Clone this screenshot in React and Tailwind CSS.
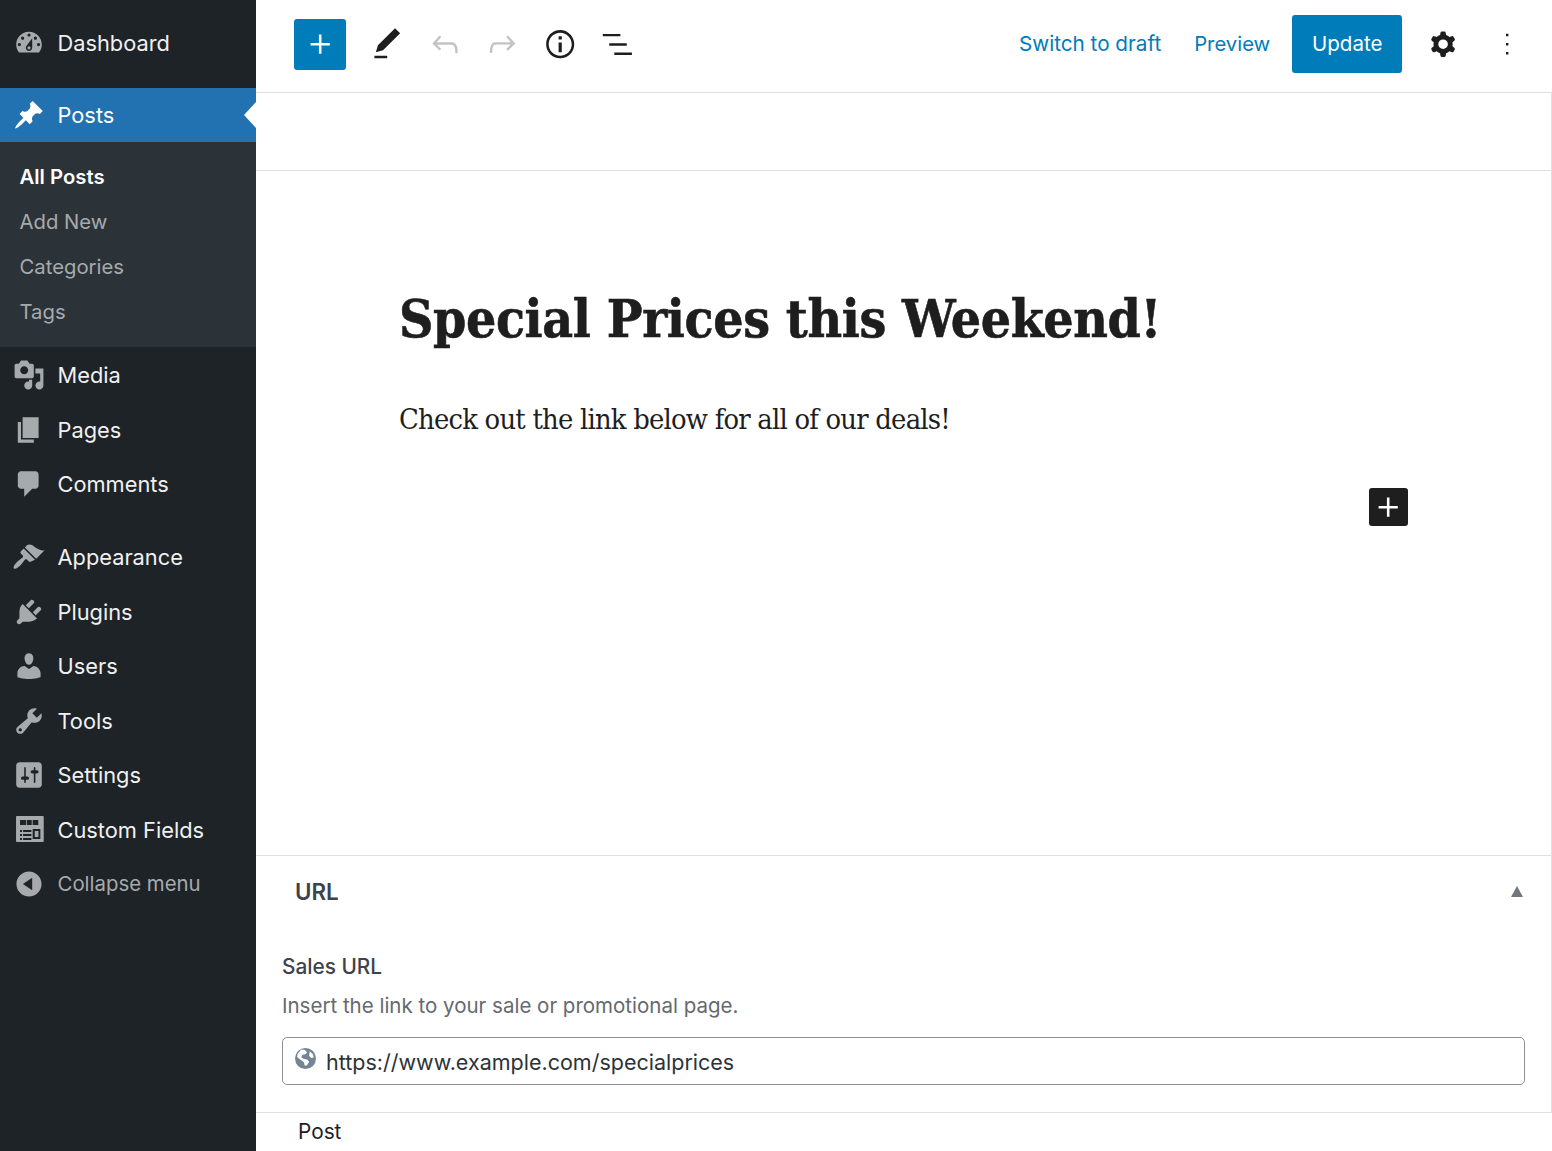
import React from "react";

const I = {
  dashboard: "M3.76 16h12.48c1.1-1.37 1.76-3.11 1.76-5 0-4.42-3.58-8-8-8s-8 3.58-8 8c0 1.89.66 3.63 1.76 5zM10 4c.55 0 1 .45 1 1s-.45 1-1 1-1-.45-1-1 .45-1 1-1zM6 6c.55 0 1 .45 1 1s-.45 1-1 1-1-.45-1-1 .45-1 1-1zm8 0c.55 0 1 .45 1 1s-.45 1-1 1-1-.45-1-1 .45-1 1-1zm-5.37 5.55L12 7v6c0 1.1-.9 2-2 2s-2-.9-2-2c0-.57.24-1.08.63-1.45zM4 10c.55 0 1 .45 1 1s-.45 1-1 1-1-.45-1-1 .45-1 1-1zm12 0c.55 0 1 .45 1 1s-.45 1-1 1-1-.45-1-1 .45-1 1-1zm-5 3c0-.55-.45-1-1-1s-1 .45-1 1 .45 1 1 1 1-.45 1-1z",
  post: "M10.44 3.02l1.82-1.82 6.36 6.35-1.83 1.82c-1.05-.68-2.48-.57-3.41.36l-.75.75c-.92.93-1.04 2.35-.35 3.41l-1.83 1.82-2.41-2.41-2.8 2.79c-.42.42-3.38 2.71-3.8 2.29s1.86-3.39 2.28-3.81l2.79-2.79L4.1 9.36l1.83-1.82c1.05.69 2.48.57 3.4-.36l.75-.75c.93-.92 1.05-2.35.36-3.41z",
  media: "M13 11V4c0-.55-.45-1-1-1h-1.67L9 1H5L3.67 3H2c-.55 0-1 .45-1 1v7c0 .55.45 1 1 1h10c.55 0 1-.45 1-1zM7 4.5c1.38 0 2.5 1.12 2.5 2.5S8.38 9.5 7 9.5 4.5 8.38 4.5 7 5.62 4.5 7 4.5zM14 6h5v10.5c0 1.38-1.12 2.5-2.5 2.5S14 17.88 14 16.5s1.12-2.5 2.5-2.5c.17 0 .34.02.5.05V9h-3V6zm-4 8.05V13h2v3.5c0 1.38-1.12 2.5-2.5 2.5S7 17.88 7 16.5 8.12 14 9.5 14c.17 0 .34.02.5.05z",
  page: "M6 15V2h10v13H6zm-1 1h8v2H3V5h2v11z",
  comments: "M5 2h9c1.1 0 2 .9 2 2v7c0 1.1-.9 2-2 2h-2l-5 5v-5H5c-1.1 0-2-.9-2-2V4c0-1.1.9-2 2-2z",
  appearance: "M14.48 11.06L7.41 3.99l1.5-1.5c.5-.56 2.3-.47 3.51.32 1.21.8 1.43 1.28 2.91 2.1 1.18.64 2.45 1.26 4.45.85zm-.71.71L6.7 4.7 4.93 6.47c-.39.39-.39 1.02 0 1.41l1.06 1.06c.39.39.39 1.03 0 1.42-.6.6-1.43 1.11-2.21 1.69-.35.26-.7.53-1.01.84-1.34 1.34-3 3.3-2.2 4.3.9.8 2.96-.86 4.3-2.2.31-.31.58-.66.84-1.01.58-.78 1.09-1.61 1.69-2.21.39-.39 1.03-.39 1.42 0l1.06 1.06c.39.39 1.02.39 1.41 0z",
  plugins: "M13.11 4.36L9.87 7.6 8 5.73l3.24-3.24c.35-.34 1.05-.2 1.56.32.52.51.66 1.21.31 1.55zm-8 1.77l.91-1.12 9.01 9.01-1.19.84c-.71.71-2.63 1.16-3.82 1.16H6.14L4.9 17.26c-.59.59-1.54.59-2.12 0-.59-.58-.59-1.53 0-2.12l1.24-1.24v-3.88c0-1.13.4-3.19 1.09-3.89zm7.26 3.97l3.24-3.24c.34-.35 1.04-.21 1.55.31.52.51.66 1.21.31 1.55l-3.24 3.25z",
  users: "M10 9.25c-2.27 0-2.73-3.44-2.73-3.44C7 4.02 7.82 2 9.97 2c2.16 0 2.98 2.02 2.71 3.81 0 0-.41 3.44-2.68 3.44zm0 2.57L12.72 10c2.39 0 4.52 2.33 4.52 4.53v2.49s-3.65 1.13-7.24 1.13c-3.65 0-7.24-1.13-7.24-1.13v-2.49c0-2.25 1.94-4.48 4.47-4.48z",
  tools: "M16.68 9.77c-1.34 1.34-3.3 1.67-4.95.99l-5.41 6.52c-.99.99-2.59.99-3.58 0s-.99-2.59 0-3.57l6.52-5.42c-.68-1.65-.35-3.61.99-4.95 1.28-1.28 3.12-1.62 4.72-1.06l-2.89 2.89 2.82 2.82 2.86-2.87c.53 1.58.18 3.39-1.08 4.65zM3.81 16.21c.4.39 1.04.39 1.43 0 .4-.4.4-1.04 0-1.43-.39-.4-1.03-.4-1.43 0-.39.39-.39 1.03 0 1.43z",
  settings: "M18 16V4c0-1.1-.9-2-2-2H4c-1.1 0-2 .9-2 2v12c0 1.1.9 2 2 2h12c1.1 0 2-.9 2-2zM8 11h1c.55 0 1 .45 1 1s-.45 1-1 1H8v1.5c0 .28-.22.5-.5.5s-.5-.22-.5-.5V13H6c-.55 0-1-.45-1-1s.45-1 1-1h1V5.5c0-.28.22-.5.5-.5s.5.22.5.5V11zm5-2h-1c-.55 0-1-.45-1-1s.45-1 1-1h1V5.5c0-.28.22-.5.5-.5s.5.22.5.5V7h1c.55 0 1 .45 1 1s-.45 1-1 1h-1v5.5c0 .28-.22.5-.5.5s-.5-.22-.5-.5V9z",
  fields: "M2.4 1.25H18.700c.3 0 .5.2.5.5V17c0 .3-.2.5-.5.5H2.400c-.3 0-.5-.2-.5-.5V1.750c0-.3.2-.5.5-.5zM4.400 3.750v3.150h3.700V3.750H4.400zm4.200 0v3.150h3.100V3.750H8.600zm3.700 0v3.150h3.500V3.750h-3.500zM4.400 10v1.200h1.200V10H4.400zm1.900 0v1.200h5.200V10H6.300zM4.400 12.500v1.200h1.200v-1.200H4.400zm1.900 0v1.200h5.200v-1.200H6.300zM4.400 15v1.200h1.200V15H4.400zm1.900 0v1.200h5.200V15H6.300zM12.300 9.400v6.200h4.800V9.400h-4.800zm1.300 1.200h2.300v3.800h-2.300v-3.800z",
  collapse: "M10 2.16c4.33 0 7.84 3.51 7.84 7.84s-3.51 7.84-7.84 7.84S2.16 14.33 2.16 10 5.71 2.16 10 2.16zm2 11.72V6.120L6.180 9.970z",
};

function Dash({ d, className = "fill-[#a7aaad]", evenodd }) {
  return (
    <svg viewBox="0 0 20 20" className={`w-8 h-8 shrink-0 ${className}`}>
      <path d={d} fillRule={evenodd ? "evenodd" : undefined} />
    </svg>
  );
}

function MenuItem({ icon, label, evenodd, muted }) {
  return (
    <div className="flex items-center h-[54.6px] pl-[13px]">
      <Dash d={icon} evenodd={evenodd} />
      <span className={`ml-[12.500px] pt-[1.500px] leading-none ${muted ? "text-[20.4px] text-[#a7aaad]" : "text-[21.8px] text-[#f0f0f1]"}`}>{label}</span>
    </div>
  );
}

function Sub({ children, active }) {
  return (
    <div className={`h-[45px] flex items-center pl-[19.5px] text-[20.3px] ${active ? "text-white font-semibold" : "text-[#a7aaad]"}`}>
      {children}
    </div>
  );
}

function Tb({ children, className = "fill-[#1e1e1e]" }) {
  return (
    <div className="w-[57.6px] h-[38px] flex items-center justify-center">
      <svg viewBox="0 0 24 24" className={`w-[38.4px] h-[38.4px] ${className}`}>{children}</svg>
    </div>
  );
}

export default function App() {
  return (
    <div className="flex h-[1151px] overflow-hidden bg-white font-['Inter',sans-serif]">
      <aside className="w-[256px] shrink-0 bg-[#1d2327] pt-4">
        <MenuItem icon={I.dashboard} label="Dashboard" />
        <div className="mt-[17.4px] h-[54px] bg-[#2271b1] relative flex items-center pl-[13px]">
          <Dash d={I.post} className="fill-white" />
          <span className="ml-[12.500px] pt-[1.500px] text-[21.8px] leading-none text-white">Posts</span>
          <div className="absolute right-0 top-[14px] w-0 h-0 border-y-[13px] border-y-transparent border-r-[12px] border-r-white" />
        </div>
        <div className="bg-[#2c3338] h-[205px] py-[12.500px]">
          <Sub active>All Posts</Sub>
          <Sub>Add New</Sub>
          <Sub>Categories</Sub>
          <Sub>Tags</Sub>
        </div>
        <div className="pt-[1px]">
          <MenuItem icon={I.media} label="Media" />
          <MenuItem icon={I.page} label="Pages" />
          <MenuItem icon={I.comments} label="Comments" />
        </div>
        <div className="mt-[18px]">
          <MenuItem icon={I.appearance} label="Appearance" />
          <MenuItem icon={I.plugins} label="Plugins" />
          <MenuItem icon={I.users} label="Users" />
          <MenuItem icon={I.tools} label="Tools" />
          <MenuItem icon={I.settings} label="Settings" />
          <MenuItem icon={I.fields} label="Custom Fields" evenodd />
        </div>
        <div className="-mt-[1px]">
          <MenuItem icon={I.collapse} label="Collapse menu" muted />
        </div>
      </aside>

      <main className="flex-1 min-w-0 flex flex-col">
        <header className="h-[93px] shrink-0 border-b border-[#e0e0e0] flex items-center pl-[38px] pr-[26px] pb-[4px]">
          <div className="w-[52px] h-[51px] rounded-[3px] bg-[#007cba] flex items-center justify-center">
            <svg viewBox="0 0 24 24" className="w-[38.4px] h-[38.4px] fill-white">
              <path d="M18 11.2h-5.200V6h-1.600v5.200H6v1.600h5.200V18h1.600v-5.200H18z" />
            </svg>
          </div>
          <div className="flex items-center ml-[12.500px]">
            <Tb><path d="M20.100 5.100L16.900 2 6.200 12.700l-1.300 4.400 4.500-1.300L20.100 5.100zM4 20.800h8v-1.500H4v1.500z" /></Tb>
            <Tb className="fill-[#c3c3c3]"><path d="M18.300 11.700c-.6-.6-1.400-.9-2.300-.9H6.700l2.900-3.300-1.100-1-4.500 5L8.500 16l1-1-2.700-2.700H16c.5 0 .9.2 1.300.5 1 1 1 3.400 1 4.500v.3h1.500v-.2c0-1.500 0-4.300-1.500-5.700z" /></Tb>
            <Tb className="fill-[#c3c3c3]"><path d="M15.600 6.500l-1.100 1 2.900 3.300H8c-.9 0-1.700.3-2.300.9-1.400 1.500-1.400 4.200-1.400 5.600v.2h1.500v-.3c0-1.100 0-3.500 1-4.500.3-.3.7-.5 1.300-.5h9.200L14.500 15l1.100 1.100 4.600-4.600-4.600-5z" /></Tb>
            <Tb><path d="M12 3.200c-4.800 0-8.800 3.900-8.800 8.800 0 4.800 3.900 8.800 8.800 8.800 4.800 0 8.800-3.900 8.800-8.800 0-4.800-4-8.800-8.800-8.800zm0 16c-4 0-7.200-3.300-7.200-7.200C4.800 8 8 4.800 12 4.800s7.200 3.300 7.200 7.200c0 4-3.200 7.200-7.200 7.200zM11 17h2v-6h-2v6zm0-8h2V7h-2v2z" /></Tb>
            <Tb><path d="M3 5.600h11v1.500H3zM7 11.400h11v1.500H7zM10.200 17.200h11v1.500h-11z" /></Tb>
          </div>
          <div className="flex-1" />
          <span className="pt-[1px] text-[20.7px] text-[#007cba] leading-none">Switch to draft</span>
          <span className="pt-[1px] ml-[33px] text-[20.3px] text-[#007cba] leading-none">Preview</span>
          <div className="pt-[1px] ml-[22px] w-[110px] h-[58px] rounded-[3px] bg-[#007cba] text-white text-[20.5px] flex items-center justify-center">Update</div>
          <svg viewBox="0 0 24 24" className="ml-[22px] w-[38.4px] h-[38.4px] fill-[#1e1e1e]">
            <path fillRule="evenodd" d="M10.289 4.836A1 1 0 0111.275 4h1.306a1 1 0 01.987.836l.244 1.466c.787.26 1.503.679 2.108 1.218l1.393-.522a1 1 0 011.216.437l.653 1.130a1 1 0 01-.23 1.273l-1.148.944a6.025 6.025 0 010 2.435l1.149.946a1 1 0 01.23 1.272l-.653 1.130a1 1 0 01-1.216.437l-1.394-.522c-.605.54-1.320.958-2.108 1.218l-.244 1.466a1 1 0 01-.987.836h-1.306a1 1 0 01-.986-.836l-.244-1.466a5.995 5.995 0 01-2.108-1.218l-1.394.522a1 1 0 01-1.217-.436l-.653-1.131a1 1 0 01.23-1.272l1.149-.946a6.026 6.026 0 010-2.435l-1.148-.944a1 1 0 01-.23-1.272l.653-1.131a1 1 0 011.217-.437l1.393.522a5.994 5.994 0 012.108-1.218l.244-1.466zM14.929 12a3 3 0 11-6 0 3 3 0 016 0z" />
          </svg>
          <svg viewBox="0 0 24 24" className="ml-[25px] w-[38.4px] h-[38.4px] fill-[#1e1e1e]">
            <path d="M11.250 5.500h1.500v1.600h-1.500zM11.250 11.200h1.500v1.600h-1.500zM11.250 16.900h1.500v1.600h-1.500z" />
          </svg>
        </header>

        <div className="flex-1 min-h-0 border-r border-[#e0e0e0] flex flex-col">
          <div className="h-[78px] shrink-0 border-b border-[#e0e0e0]" />
          <div className="h-[685px] shrink-0 border-b border-[#e0e0e0] pl-[143px] pr-[143px] pt-[111px] font-['DejaVu_Serif',serif] [font-stretch:condensed] text-[#1e1e1e]">
            <h1 className="text-[53px] leading-[72px] font-bold tracking-[-0.4px] [-webkit-text-stroke:0.6px_#1e1e1e] whitespace-nowrap">Special Prices this Weekend!</h1>
            <p className="mt-[45px] text-[28.8px] leading-[40px] tracking-[-0.78px] whitespace-nowrap">Check out the link below for all of our deals!</p>
            <div className="flex justify-end mt-[49px]">
              <div className="w-[39px] h-[38px] rounded-[3px] bg-[#1e1e1e] flex items-center justify-center">
                <svg viewBox="0 0 24 24" className="w-[38.4px] h-[38.4px] fill-white">
                  <path d="M18 11.200h-5.200V6h-1.600v5.200H6v1.600h5.200V18h1.600v-5.200H18z" />
                </svg>
              </div>
            </div>
          </div>
          <div className="h-[257px] shrink-0 border-b border-[#e0e0e0] px-[26px]">
            <div className="h-[71px] flex items-center justify-between pl-[13px] pr-[2px]">
              <span className="text-[22.400px] font-semibold text-[#3c434a]">URL</span>
              <div className="-mt-[1px] w-0 h-0 border-x-[6.500px] border-x-transparent border-b-[11px] border-b-[#72777c]" />
            </div>
            <div className="mt-[28px] text-[20.8px] leading-[24px] font-medium text-[#3c434a]">Sales URL</div>
            <div className="mt-[15px] text-[20.5px] leading-[24px] text-[#646970]">Insert the link to your sale or promotional page.</div>
            <div className="mt-[19px] h-[48px] border border-[#8c8f94] rounded-[5px] flex items-center pl-[12px]">
              <svg viewBox="0 0 20 20" className="w-[21px] h-[21px] -mt-[5px] shrink-0">
                <circle cx="10" cy="10" r="10" fill="#758494" />
                <path d="M6 1.500l3.500.5 2 2-1.500 2-3 .5-1 2.500 2.500 1.500 3 .5 2 2-2.500 4-2-.5-.5-3-3-2-3.500-3 .5-3z" fill="#fff" />
                <path d="M14 3l3 3 .8 3-2.300.5-2-2z" fill="#fff" />
              </svg>
              <span className="ml-[10px] mt-[4px] text-[21.5px] leading-none text-[#2c3338]">https://www.example.com/specialprices</span>
            </div>
          </div>
        </div>
        <div className="h-[38px] shrink-0 pl-[42px] pt-[4px] text-[20.8px] leading-[30px] text-[#1e1e1e]">Post</div>
      </main>
    </div>
  );
}
